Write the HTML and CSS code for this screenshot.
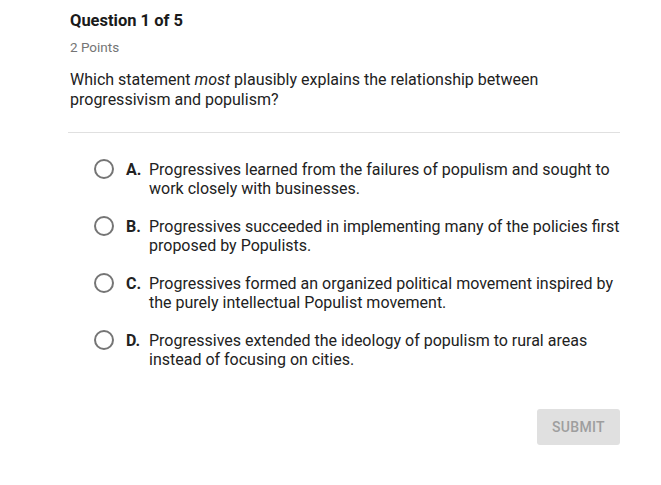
FILE: index.html
```html
<!DOCTYPE html>
<html>
<head>
<meta charset="utf-8">
<link rel="stylesheet" href="styles.css">
</head>
<body>
<div class="quiz">
  <h1 class="title">Question 1 of 5</h1>
  <div class="points">2 Points</div>
  <p class="prompt">Which statement <em>most</em> plausibly explains the relationship between progressivism and populism?</p>
  <hr class="divider">
  <ul class="options">
    <li class="option"><span class="radio"></span><span class="letter">A.</span><span class="text">Progressives learned from the failures of populism and sought to work closely with businesses.</span></li>
    <li class="option"><span class="radio"></span><span class="letter">B.</span><span class="text">Progressives succeeded in implementing many of the policies first proposed by Populists.</span></li>
    <li class="option"><span class="radio"></span><span class="letter">C.</span><span class="text">Progressives formed an organized political movement inspired by the purely intellectual Populist movement.</span></li>
    <li class="option"><span class="radio"></span><span class="letter">D.</span><span class="text">Progressives extended the ideology of populism to rural areas instead of focusing on cities.</span></li>
  </ul>
  <div class="actions"><button class="submit" disabled>SUBMIT</button></div>
</div>
</body>
</html>
```
FILE: styles.css
```css
html, body {
  margin: 0;
  padding: 0;
  background: #ffffff;
}
body {
  font-family: Roboto, "Liberation Sans", sans-serif;
  color: #222222;
}
.quiz {
  width: 550px;
  padding: 11px 0 0 70px;
}
.title {
  margin: 0;
  font-size: 16.5px;
  line-height: 20px;
  font-weight: 700;
  color: #1a1a1a;
}
.points {
  margin-top: 8px;
  font-size: 13.5px;
  line-height: 16px;
  color: #757575;
}
.prompt {
  margin: 15px 0 0;
  font-size: 16px;
  line-height: 20px;
  color: #222222;
}
.divider {
  margin: 22px 0 0 -2px;
  border: 0;
  border-top: 1px solid #e0e0e0;
  height: 0;
}
.options {
  list-style: none;
  margin: 27px 0 0;
  padding: 0 0 0 24px;
}
.option {
  display: flex;
  align-items: flex-start;
  font-size: 16px;
  line-height: 19px;
  margin-bottom: 19px;
}
.radio {
  flex: none;
  width: 16px;
  height: 16px;
  border: 2px solid #757575;
  border-radius: 50%;
  margin: -1px 12px 0 0;
}
.letter {
  flex: none;
  width: 23px;
  font-weight: 700;
  color: #222222;
}
.text {
  flex: 1;
}
.actions {
  display: flex;
  justify-content: flex-end;
  margin-top: 40px;
}
.submit {
  width: 83px;
  height: 36px;
  border: 0;
  border-radius: 3px;
  background: #e0e0e0;
  color: #9e9e9e;
  font-family: Roboto, "Liberation Sans", sans-serif;
  font-size: 14px;
  font-weight: 500;
  letter-spacing: 0.3px;
  padding: 0;
}
```
